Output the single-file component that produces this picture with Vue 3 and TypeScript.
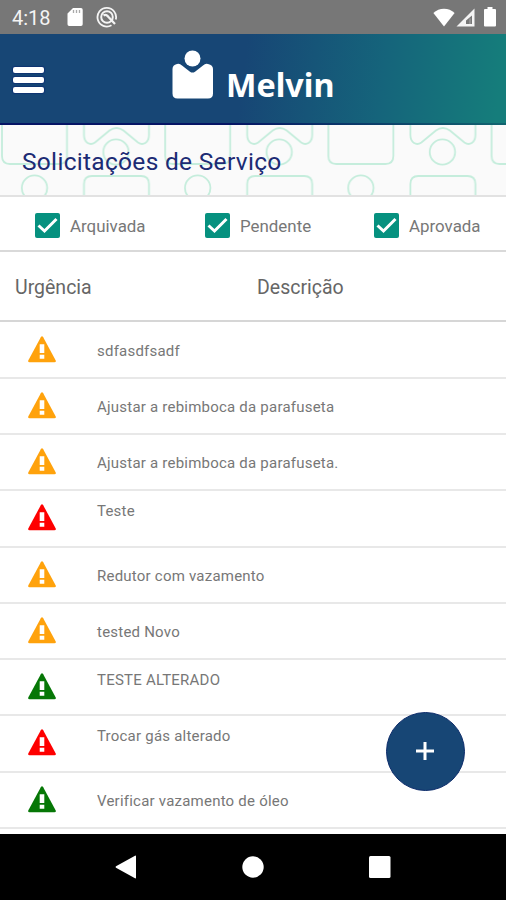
<script setup lang="ts">
interface ServiceRequest {
  description: string
  urgency: 'medium' | 'high' | 'low'
  raised?: boolean
}

const filters: string[] = ['Arquivada', 'Pendente', 'Aprovada']

const requests: ServiceRequest[] = [
  { description: 'sdfasdfsadf', urgency: 'medium' },
  { description: 'Ajustar a rebimboca da parafuseta', urgency: 'medium' },
  { description: 'Ajustar a rebimboca da parafuseta.', urgency: 'medium' },
  { description: 'Teste', urgency: 'high', raised: true },
  { description: 'Redutor com vazamento', urgency: 'medium' },
  { description: 'tested Novo', urgency: 'medium' },
  { description: 'TESTE ALTERADO', urgency: 'low', raised: true },
  { description: 'Trocar gás alterado', urgency: 'high', raised: true },
  { description: 'Verificar vazamento de óleo', urgency: 'low' },
]
</script>

<template>
  <div class="screen">
    <div class="status">
      <span class="clock">4:18</span>
      <svg class="sd" width="16" height="20" viewBox="0 0 16 20">
        <path d="M6 1h8a1.7 1.7 0 0 1 1.7 1.7v14.6A1.7 1.7 0 0 1 14 19H2.2A1.7 1.7 0 0 1 .5 17.3V6.5z" fill="#fff" />
        <path d="M6.5 3v3M9.5 3v3M12.5 3v3" stroke="#aaa" stroke-width="1.3" />
      </svg>
      <svg class="sync" width="22" height="22" viewBox="0 0 22 22" fill="none" stroke="#f4f4f4">
        <path d="M15.5 19.2A9.3 9.3 0 1 1 19.8 13.5" stroke-width="1.8" />
        <circle cx="11" cy="11" r="5.8" stroke-width="2" />
        <path d="M7.5 9.5c2-1.5 3.500-.5 5 1.500l6.500 7" stroke-width="2.2" />
      </svg>
      <span class="grow"></span>
      <svg class="wifi" width="22" height="19" viewBox="0 0 22 19">
        <path d="M11 18.500.4 5C6-.7 16-.7 21.600 5z" fill="#fff" />
      </svg>
      <svg class="signal" width="19" height="19" viewBox="0 0 19 19">
        <path d="M18.500.5v18H.5z" fill="#f4f4f4" />
        <path d="M16 7.500V16h-6V12.500z" fill="#777" />
        <path d="M14 10.500V16" stroke="#aaa" stroke-width="1" />
      </svg>
      <svg class="battery" width="12" height="20" viewBox="0 0 12 20">
        <path d="M3.500 0h5v2H11a1 1 0 0 1 1 1v15.500a1 1 0 0 1-1 1H1a1 1 0 0 1-1-1V3a1 1 0 0 1 1-1h2.500z" fill="#fff" />
      </svg>
    </div>

    <header class="appbar">
      <div class="menu"><i></i><i></i><i></i></div>
      <div class="brand">
        <svg width="42" height="50" viewBox="0 0 42 50" fill="#fff">
          <circle cx="20.500" cy="8.500" r="8" />
          <path d="M5 14q2.500-1 5 1.500l8 6.200q2.500 1.800 5 0l8-6.200q2.500-2.500 5-1.500 5 1 5 5v24.500q0 5-5 5H5.500q-5 0-5-5V19q0-4 4.500-5z" />
        </svg>
        <span class="name">Melvin</span>
      </div>
    </header>

    <section class="banner">
      <svg class="shapes" width="506" height="70">
        <defs>
          <pattern id="tiles" x="0" y="0" width="163.2" height="70" patternUnits="userSpaceOnUse">
            <g fill="none" stroke="#c5eddc" stroke-width="1.8">
              <path d="M2-4V31q0 8 8 8H59q8 0 8-8V-4" />
              <path d="M84-4V10c0 8 6 11 11 7.500L109.500 5.500q7-5 14 0L138 17.500c5 3.500 11 .5 11-7.500V-4" />
              <circle cx="116" cy="27" r="12.7" />
              <circle cx="34.500" cy="63" r="12.7" />
              <path d="M84 74V59q0-8 8-8H141q8 0 8 8V74" />
            </g>
          </pattern>
        </defs>
        <rect width="506" height="70" fill="url(#tiles)" />
      </svg>
      <h1>Solicitações de Serviço</h1>
    </section>

    <section class="filters">
      <label v-for="name in filters" :key="name">
        <svg width="25" height="25" viewBox="0 0 25 25">
          <rect width="25" height="25" rx="2" fill="#06917f" />
          <path d="M3.500 12.500 9.500 18 21.500 6" fill="none" stroke="#fff" stroke-width="3" />
        </svg>
        <span>{{ name }}</span>
      </label>
    </section>

    <div class="head">
      <span>Urgência</span>
      <span>Descrição</span>
    </div>

    <main class="list">
      <div v-for="(item, index) in requests" :key="index" class="row">
        <svg class="warn" :class="item.urgency" width="28" height="27" viewBox="0 0 28 27">
          <path d="M12.800 1.200q1.200-1.800 2.400 0L27.600 24.200q.9 2-1.200 2H1.600q-2.100 0-1.200-2z" fill="currentColor" />
          <path d="M11.700 8.300h4.600v8.700h-4.600zM11.700 18.800h4.600v4h-4.600z" fill="#fff" />
        </svg>
        <span class="text" :class="{ raised: item.raised }">{{ item.description }}</span>
      </div>
      <button class="add" type="button" aria-label="Adicionar">
        <svg width="18" height="18" viewBox="0 0 18 18"><path d="M9 0v18M0 9h18" stroke="#fff" stroke-width="3" /></svg>
      </button>
    </main>

    <nav class="nav">
      <svg width="22" height="24" viewBox="0 0 22 24"><path d="M20 .7q1-.5 1 .7v21.200q0 1.200-1 .7L1 12.700q-1-.7 0-1.400z" fill="#fff" /></svg>
      <svg width="22" height="22" viewBox="0 0 22 22"><circle cx="11" cy="11" r="10.7" fill="#fff" /></svg>
      <svg width="22" height="22" viewBox="0 0 22 22"><rect width="21.5" height="22" rx="1.5" fill="#fff" /></svg>
    </nav>
  </div>
</template>

<style>
body { margin: 0; }
</style>

<style scoped>
.screen {
  width: 506px;
  height: 900px;
  display: flex;
  flex-direction: column;
  overflow: hidden;
  background: #fff;
  font-family: Roboto, sans-serif;
  color: #777;
}
.status {
  height: 34px;
  flex: none;
  box-sizing: border-box;
  display: flex;
  align-items: center;
  padding: 0 10px 0 12px;
  background: #777;
  color: #f4f4f4;
}
.clock { width: 55px; font-size: 20px; line-height: 34px; padding-top: 2px; }
.sd { margin-right: 13px; }
.grow { flex: 1; }
.signal { margin: 0 9px 0 1px; }
.appbar {
  height: 91px;
  flex: none;
  box-sizing: border-box;
  display: flex;
  padding-left: 13px;
  border-bottom: 2px solid #051a60;
  border-image: linear-gradient(90deg, #051464 45%, #12656f) 1;
  background: linear-gradient(97deg, #174675 48%, #15647b 75%, #157d7b 98%);
}
.menu { width: 159px; padding-top: 33px; display: flex; flex-direction: column; gap: 4px; }
.menu i { width: 31px; height: 6px; border-radius: 2px; background: #fff; box-shadow: 0 0 1px 1px #103473; }
.brand { display: flex; padding-top: 16px; }
.name {
  margin: 12px 0 0 12px;
  font: 700 32.3px/44px "Noto Sans", sans-serif;
  color: #fff;
}
.banner { height: 70px; flex: none; display: grid; background: #fafafa; }
.shapes, h1 { grid-area: 1 / 1; }
h1 {
  margin: 0;
  padding: 0 0 0 22px;
  font-size: 24.5px;
  line-height: 74px;
  font-weight: 400;
  letter-spacing: 0.3px;
  color: #1c2b74;
  z-index: 1;
}
.filters {
  height: 57px;
  flex: none;
  box-sizing: border-box;
  display: grid;
  grid-template-columns: 170px 169px 1fr;
  padding-left: 35px;
  border-top: 2px solid #e2e2e2;
  border-bottom: 2px solid #d9d9d9;
}
label { display: flex; align-items: center; padding-top: 4px; }
label span { margin-left: 10px; font-size: 16.9px; line-height: 20px; white-space: nowrap; }
label svg { flex: none; }
.head {
  height: 70px;
  flex: none;
  box-sizing: border-box;
  display: grid;
  grid-template-columns: 242px 1fr;
  padding-left: 15px;
  border-bottom: 2px solid #d6d6d6;
  font-size: 19.5px;
  line-height: 72px;
  color: #666;
}
.list { height: 511.5px; flex: none; position: relative; box-sizing: border-box; padding-top: 0.5px; }
.row {
  height: 56.25px;
  box-sizing: border-box;
  display: flex;
  align-items: flex-start;
  padding-left: 28px;
  border-bottom: 2px solid #e8e8e8;
}
.warn { flex: none; margin-top: 13px; }
.medium { color: #ffa20c; }
.high { color: #fe0000; }
.low { color: #067706; }
.text { margin: 18.4px 0 0 41px; font-size: 15px; line-height: 20px; letter-spacing: 0.22px; }
.raised { margin-top: 9.5px; }
.add {
  position: absolute;
  left: 385.5px;
  top: 390px;
  width: 79px;
  height: 79px;
  padding: 0;
  display: grid;
  place-items: center;
  border: 1px solid #0d2c6b;
  border-radius: 50%;
  background: #174675;
}
.add svg { margin: 0 1px 1px 0; }
.nav {
  flex: 1;
  display: flex;
  align-items: center;
  justify-content: center;
  gap: 105px;
  background: #000;
}
</style>
